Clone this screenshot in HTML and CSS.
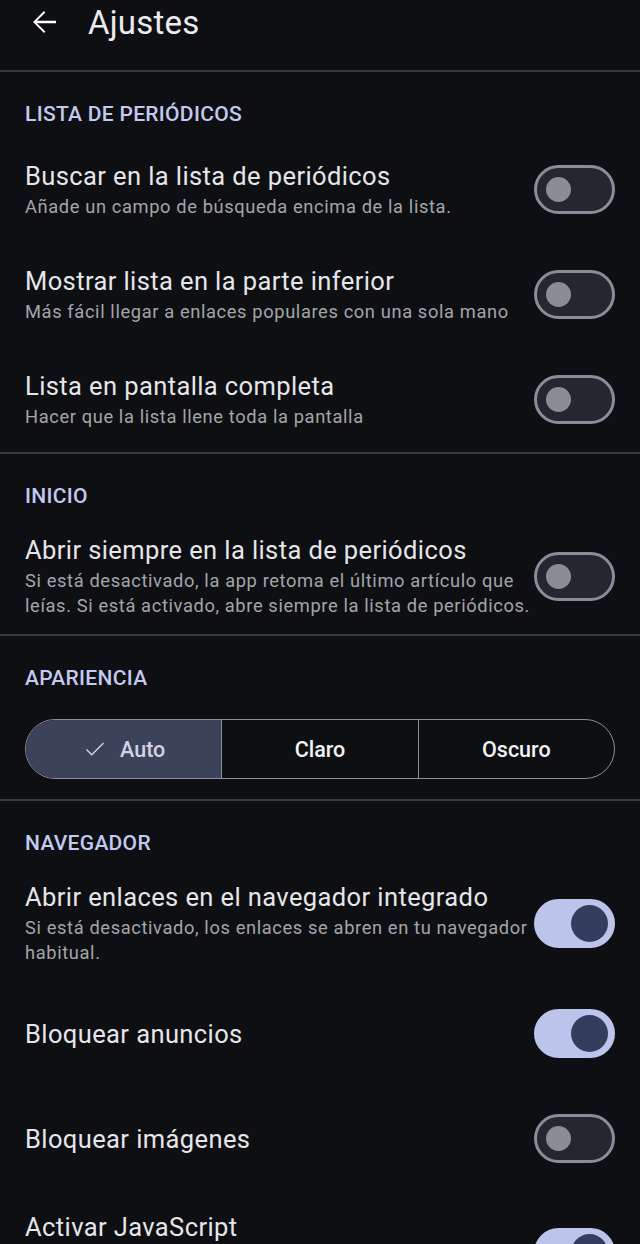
FILE: index.html
```html
<!DOCTYPE html>
<html>
	<head>
		<meta charset="utf-8">
		<title>Ajustes</title>
		<link rel="stylesheet" href="styles.css">
	</head>
	<body>
		<div class="topbar">
			<svg class="back" viewBox="0 0 24 24" width="36" height="36"><path d="M20 11.2H7.3l5.6-5.6-.9-.9-7.3 7.3 7.3 7.3.9-.9-5.6-5.6H20z" fill="#ffffff"/></svg>
			<h1>Ajustes</h1>
		</div>

		<!-- lista -->
		<div class="section">
			<h2>LISTA DE PERIÓDICOS</h2>
			<div class="row">
				<div class="txt">
					<p class="title">Buscar en la lista de periódicos</p>
					<p class="sub">Añade un campo de búsqueda encima de la lista.</p>
				</div>
				<span class="sw"></span>
			</div>
			<div class="row">
				<div class="txt">
					<p class="title">Mostrar lista en la parte inferior</p>
					<p class="sub">Más fácil llegar a enlaces populares con una sola mano</p>
				</div>
				<span class="sw"></span>
			</div>
			<div class="row">
				<div class="txt">
					<p class="title">Lista en pantalla completa</p>
					<p class="sub">Hacer que la lista llene toda la pantalla</p>
				</div>
				<span class="sw"></span>
			</div>
		</div>

		<div class="section">
			<h2>INICIO</h2>
			<div class="row">
				<div class="txt">
					<p class="title">Abrir siempre en la lista de periódicos</p>
					<p class="sub">Si está desactivado, la app retoma el último artículo que leías. Si está activado, abre siempre la lista de periódicos.</p>
				</div>
				<span class="sw"></span>
			</div>
		</div>

		<div class="section">
			<h2>APARIENCIA</h2>
			<div class="seg">
				<span class="opt on"><svg viewBox="0 0 24 24" width="26" height="26"><path d="M9 16.4 4.6 12l-.9.9L9 18.2 20.3 6.9l-.9-.9z" fill="#d0d3e2"/></svg>Auto</span>
				<span class="opt">Claro</span>
				<span class="opt">Oscuro</span>
			</div>
		</div>

		<div class="section last">
			<h2>NAVEGADOR</h2>
			<div class="row">
				<div class="txt">
					<p class="title">Abrir enlaces en el navegador integrado</p>
					<p class="sub">Si está desactivado, los enlaces se abren en tu navegador habitual.</p>
				</div>
				<span class="sw checked"></span>
			</div>
			<div class="row">
				<div class="txt">
					<p class="title">Bloquear anuncios</p>
				</div>
				<span class="sw checked"></span>
			</div>
			<div class="row">
				<div class="txt">
					<p class="title">Bloquear imágenes</p>
				</div>
				<span class="sw"></span>
			</div>
			<div class="row js">
				<div class="txt">
					<p class="title">Activar JavaScript</p>
				</div>
				<span class="sw checked"></span>
			</div>
		</div>
	</body>
</html>
```

FILE: styles.css
```css
body{
	margin: 0;
	background-color: #0e0f13;
	font-family: Roboto, "Noto Sans", sans-serif;
	color: #e6e6ea;
	overflow: hidden;
}

/* barra superior */
.topbar{
	display: flex;
	align-items: center;
	height: 44px;
	padding: 0 0 26px 26px;
	border-bottom: 2px solid #36373c;
}
.back{
	margin-right: 26px;
}
.topbar h1{
	margin: 0;
	font-size: 33px;
	font-weight: 400;
	letter-spacing: 0.2px;
	color: #ececf0;
}

/* secciones */
.section{
	border-bottom: 2px solid #36373c;
}
.section.last{
	border-bottom: none;
}
.section h2{
	margin: 0;
	padding: 30px 25px 11px;
	height: 24px;
	line-height: 24px;
	font-size: 21px;
	font-weight: 500;
	letter-spacing: 0.3px;
	color: #c3caef;
}

.row{
	display: flex;
	align-items: center;
	min-height: 105px;
	box-sizing: border-box;
	padding: 16px 25px;
}
/* la ultima fila queda cortada por abajo */
.row.js{
	align-items: flex-start;
	padding-top: 21px;
}
.row.js .sw{
	margin-top: 16px;
}
.txt{
	flex: 1;
}
.txt p{
	margin: 0;
}
.title{
	font-size: 25.5px;
	line-height: 30px;
	letter-spacing: 0.4px;
	color: #e6e6ea;
}
.sub{
	margin-top: 3px !important;
	font-size: 18.3px;
	line-height: 25px;
	letter-spacing: 0.62px;
	color: #a3a5ab;
}

/* interruptores */
.sw{
	position: relative;
	flex: none;
	width: 81px;
	height: 49px;
	box-sizing: border-box;
	border: 3px solid #8a8d96;
	border-radius: 25px;
	background-color: #25272e;
}
.sw::after{
	content: '';
	position: absolute;
	left: 9px;
	top: 9px;
	width: 25px;
	height: 25px;
	border-radius: 50%;
	background-color: #8a8d96;
}
.sw.checked{
	border-color: #bcc4ec;
	background-color: #bcc4ec;
}
.sw.checked::after{
	left: 34px;
	top: 3px;
	width: 37px;
	height: 37px;
	background-color: #343d5e;
}

/* botones segmentados */
.seg{
	display: flex;
	height: 60px;
	margin: 18px 25px 20px;
	box-sizing: border-box;
	border: 1.5px solid #8d9099;
	border-radius: 30px;
	overflow: hidden;
}
.opt{
	flex: 1;
	display: flex;
	align-items: center;
	justify-content: center;
	font-size: 21.5px;
	font-weight: 500;
	color: #f2f2f5;
}
.opt + .opt{
	border-left: 1.5px solid #8d9099;
}
.opt.on{
	background-color: #3c4259;
	color: #d0d3e2;
}
.opt svg{
	margin-right: 12px;
}
```
